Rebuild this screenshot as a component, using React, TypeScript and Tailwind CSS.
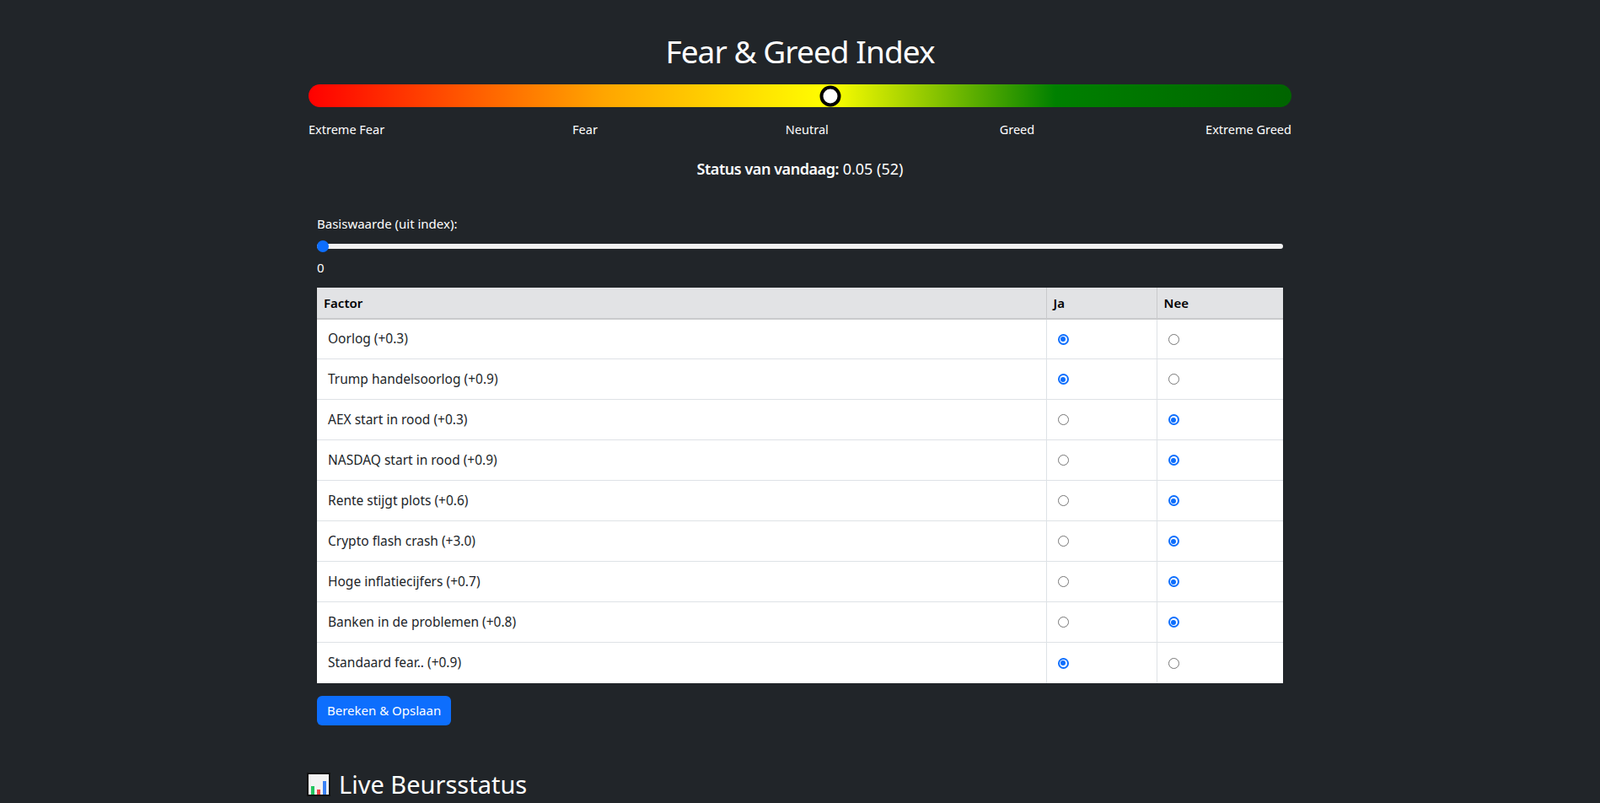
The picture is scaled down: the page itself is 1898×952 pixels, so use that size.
import React from "react";

const factors = [
  { name: "Oorlog (+0.3)", ja: true },
  { name: "Trump handelsoorlog (+0.9)", ja: true },
  { name: "AEX start in rood (+0.3)", ja: false },
  { name: "NASDAQ start in rood (+0.9)", ja: false },
  { name: "Rente stijgt plots (+0.6)", ja: false },
  { name: "Crypto flash crash (+3.0)", ja: false },
  { name: "Hoge inflatiecijfers (+0.7)", ja: false },
  { name: "Banken in de problemen (+0.8)", ja: false },
  { name: "Standaard fear.. (+0.9)", ja: true },
];

function Radio({ on }: { on: boolean }) {
  return on ? (
    <span className="w-[13px] h-[13px] rounded-full bg-[#0d6efd] flex items-center justify-center">
      <span className="w-[9px] h-[9px] rounded-full bg-white flex items-center justify-center">
        <span className="w-[6px] h-[6px] rounded-full bg-[#0d6efd]" />
      </span>
    </span>
  ) : (
    <span className="block w-[13px] h-[13px] rounded-full border border-[#767676] bg-white" />
  );
}

export default function App() {
  return (
    <div className="bg-[#212529] text-white font-['Inter',sans-serif] overflow-hidden h-[952px]">
      <div className="w-[1166px] mx-auto pt-[38px]">
        <h1 className="text-center text-[37px] leading-[46px] font-normal tracking-tight">Fear &amp; Greed Index</h1>
        <div className="relative mt-[16px] h-[27px] rounded-full bg-[linear-gradient(to_right,#ff0000_0%,#ffa500_30%,#ffff00_53%,#008000_76%,#006400_100%)]">
          <div className="absolute top-1/2 left-[619px] -translate-x-1/2 -translate-y-1/2 w-[25px] h-[25px] rounded-full bg-white border-[4px] border-black" />
        </div>
        <div className="flex justify-between mt-[16px] text-[14.5px]">
          <span>Extreme Fear</span>
          <span className="pl-[20px]">Fear</span>
          <span className="pl-[20px]">Neutral</span>
          <span className="pl-[0px]">Greed</span>
          <span>Extreme Greed</span>
        </div>
        <p className="text-center mt-[22px] text-[18px]">
          <strong className="font-semibold tracking-tight">Status van vandaag:</strong> 0.05 (52)
        </p>
        <div className="px-[10px] mt-[40px]">
          <label className="block text-[15px]">Basiswaarde (uit index):</label>
          <div className="relative mt-[8px] h-[16px] flex items-center">
            <div className="w-full h-[6px] rounded-full bg-[#f1f1f1]" />
            <div className="absolute left-0 w-[14px] h-[14px] rounded-full bg-[#0d6efd]" />
          </div>
          <div className="mt-[6px] text-[15px]">0</div>
          <table className="w-full mt-[12px] bg-white text-[#212529] text-[15px] border-collapse">
            <thead>
              <tr className="bg-[#e2e3e5] h-[37px] text-left text-black">
                <th className="font-semibold px-[8px] border-b-2 border-[#c9cacc]">Factor</th>
                <th className="font-semibold px-[8px] w-[131px] border-l border-b-2 border-[#c9cacc]">Ja</th>
                <th className="font-semibold px-[8px] w-[150px] border-l border-b-2 border-[#c9cacc]">Nee</th>
              </tr>
            </thead>
            <tbody>
              {factors.map((f, i) => (
                <tr key={f.name} className={`h-[48px] ${i < factors.length - 1 ? "border-b border-[#dee2e6]" : ""}`}>
                  <td className="px-[13px] text-[15.5px]">{f.name}</td>
                  <td className="px-[13px] border-l border-[#dee2e6]"><Radio on={f.ja} /></td>
                  <td className="px-[13px] border-l border-[#dee2e6]"><Radio on={!f.ja} /></td>
                </tr>
              ))}
            </tbody>
          </table>
          <button className="mt-[15px] bg-[#0d6efd] text-white text-[15px] rounded-[6px] px-[12px] h-[35px]">Bereken &amp; Opslaan</button>
        </div>
        <h2 className="mt-[52px] -ml-[2px] text-[29px] leading-[36px] flex items-center gap-[10px]">
          <svg width="28" height="28" viewBox="0 0 28 28">
            <rect x="0" y="0" width="28" height="28" fill="#111" />
            <rect x="2" y="2" width="24" height="24" fill="#f3f3f3" />
            <rect x="5" y="16" width="4" height="10" fill="#22c55e" />
            <rect x="12" y="20" width="4" height="6" fill="#ef4444" />
            <rect x="19" y="10" width="4" height="16" fill="#3b82f6" />
          </svg>
          Live Beursstatus
        </h2>
      </div>
    </div>
  );
}
